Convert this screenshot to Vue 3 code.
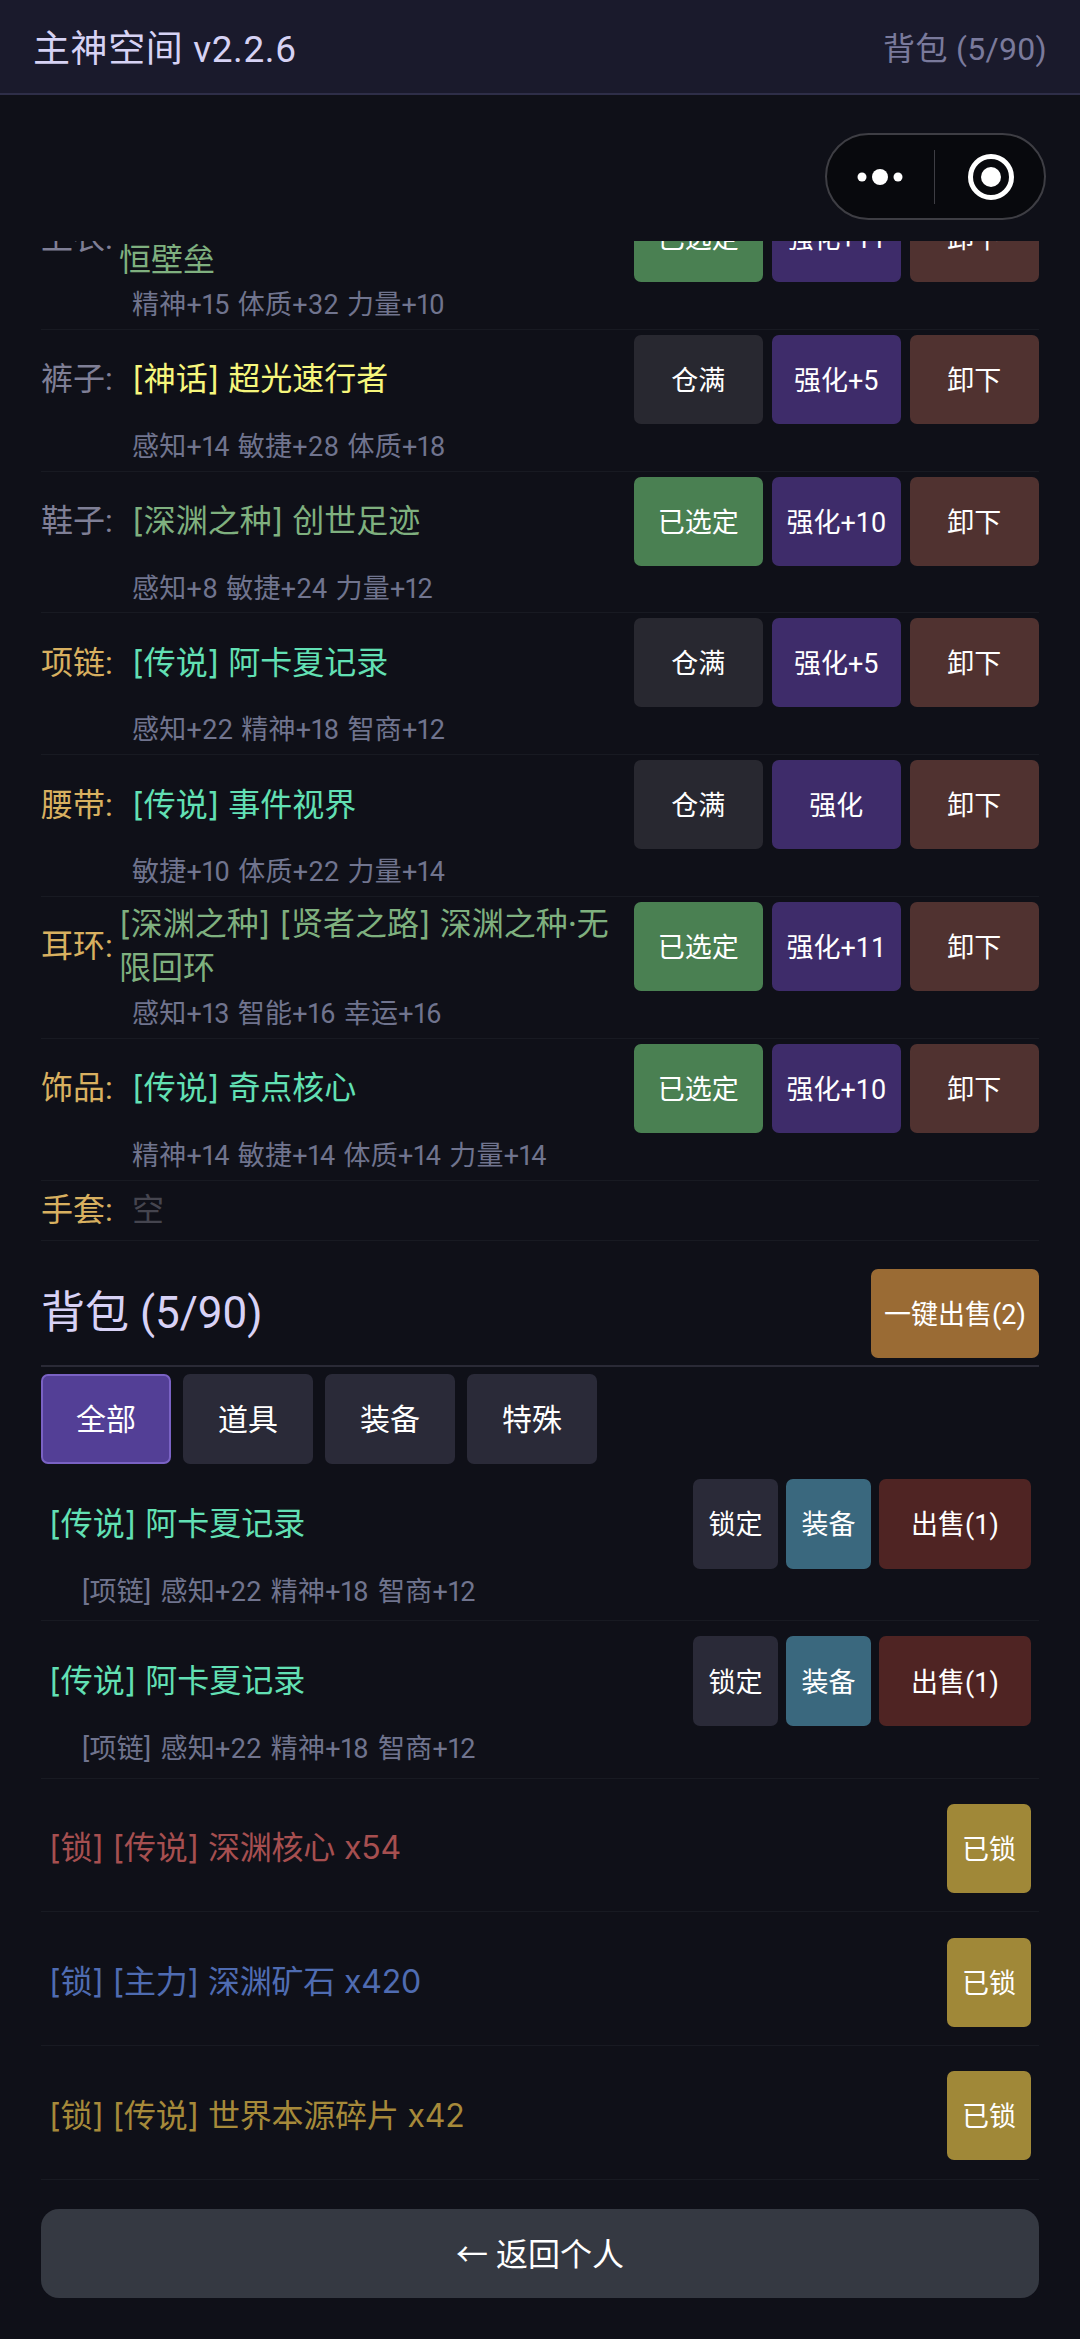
<script setup>
const gearRows = [
  { slot: '上衣', dim: true, name: '[深渊之种] [守护之路] 深渊之种·永恒壁垒', color: '#7fb07f', stats: '精神+15 体质+32 力量+10', pick: '已选定', forge: '强化+11' },
  { slot: '裤子', dim: true, name: '[神话] 超光速行者', color: '#f6f67c', stats: '感知+14 敏捷+28 体质+18', pick: '仓满', forge: '强化+5' },
  { slot: '鞋子', dim: true, name: '[深渊之种] 创世足迹', color: '#7fb07f', stats: '感知+8 敏捷+24 力量+12', pick: '已选定', forge: '强化+10' },
  { slot: '项链', name: '[传说] 阿卡夏记录', color: '#62e0b4', stats: '感知+22 精神+18 智商+12', pick: '仓满', forge: '强化+5' },
  { slot: '腰带', name: '[传说] 事件视界', color: '#62e0b4', stats: '敏捷+10 体质+22 力量+14', pick: '仓满', forge: '强化' },
  { slot: '耳环', name: '[深渊之种] [贤者之路] 深渊之种·无限回环', color: '#7fb07f', stats: '感知+13 智能+16 幸运+16', pick: '已选定', forge: '强化+11' },
  { slot: '饰品', name: '[传说] 奇点核心', color: '#62e0b4', stats: '精神+14 敏捷+14 体质+14 力量+14', pick: '已选定', forge: '强化+10' }
]

const tabs = ['全部', '道具', '装备', '特殊']

const bagItems = [
  { name: '[传说] 阿卡夏记录', stats: '[项链] 感知+22 精神+18 智商+12' },
  { name: '[传说] 阿卡夏记录', stats: '[项链] 感知+22 精神+18 智商+12' }
]

const lockedItems = [
  { name: '[锁] [传说] 深渊核心 x54', color: '#a64f50' },
  { name: '[锁] [主力] 深渊矿石 x420', color: '#4f6cb2' },
  { name: '[锁] [传说] 世界本源碎片 x42', color: '#a68a3a' }
]
</script>

<template>
  <div class="page">
    <header class="bar">
      <span class="title">主神空间 v2.2.6</span>
      <span class="bag-count">背包 (5/90)</span>
    </header>

    <div class="capsule">
      <svg class="dots" width="46" height="16" viewBox="0 0 46 16">
        <circle cx="5" cy="8" r="4.5" fill="#fff" />
        <circle cx="23" cy="8" r="8" fill="#fff" />
        <circle cx="41" cy="8" r="4.5" fill="#fff" />
      </svg>
      <i class="split"></i>
      <svg width="46" height="46" viewBox="0 0 46 46">
        <circle cx="23" cy="23" r="20.5" fill="none" stroke="#fff" stroke-width="5" />
        <circle cx="23" cy="23" r="10" fill="#fff" />
      </svg>
    </div>

    <main class="scroll">
      <div class="inner">
        <div v-for="row in gearRows" :key="row.slot" class="gear">
          <div class="gear-head">
            <div class="gear-info">
              <span class="slot" :class="{ dim: row.dim }">{{ row.slot }}:</span>
              <span class="gear-name" :style="{ color: row.color }">{{ row.name }}</span>
            </div>
            <button class="btn" :class="row.pick === '仓满' ? 'full' : 'picked'">{{ row.pick }}</button>
            <button class="btn forge">{{ row.forge }}</button>
            <button class="btn off">卸下</button>
          </div>
          <div class="gear-stats">{{ row.stats }}</div>
        </div>

        <div class="empty-row">
          <span class="slot">手套:</span>
          <span class="empty">空</span>
        </div>

        <div class="bag-head">
          <h2>背包 (5/90)</h2>
          <button class="btn sell-all">一键出售(2)</button>
        </div>

        <div class="tabs">
          <button v-for="(tab, i) in tabs" :key="tab" class="btn tab" :class="{ on: i === 0 }">{{ tab }}</button>
        </div>

        <div v-for="(item, i) in bagItems" :key="i" class="item">
          <div class="item-head">
            <span class="item-name">{{ item.name }}</span>
            <button class="btn lock">锁定</button>
            <button class="btn equip">装备</button>
            <button class="btn sell">出售(1)</button>
          </div>
          <div class="item-stats">{{ item.stats }}</div>
        </div>

        <div v-for="item in lockedItems" :key="item.name" class="locked">
          <span class="locked-name" :style="{ color: item.color }">{{ item.name }}</span>
          <button class="btn is-locked">已锁</button>
        </div>

        <button class="back">← 返回个人</button>
      </div>
    </main>
  </div>
</template>

<style>
html, body {
  margin: 0;
  background: #0f1018;
}
</style>

<style scoped>
.page {
  position: relative;
  height: 2339px;
  overflow: hidden;
  display: flex;
  flex-direction: column;
  background: #0f1018;
  font-family: Roboto, "Noto Sans CJK SC", sans-serif;
}
.bar {
  flex: none;
  display: flex;
  justify-content: space-between;
  align-items: center;
  padding: 0 33px 2px 33px;
  box-sizing: border-box;
  height: 95px;
  background: #1a1a2c;
  border-bottom: 2px solid #2e2e48;
}
.title {
  font-size: 37px;
  letter-spacing: 0.6px;
  color: #d6d2f4;
}
.bag-count {
  font-size: 32px;
  letter-spacing: 0.3px;
  color: #7a7a9c;
}
.capsule {
  position: absolute;
  top: 133px;
  left: 825px;
  width: 221px;
  height: 87px;
  box-sizing: border-box;
  display: flex;
  align-items: center;
  padding-left: 30px;
  background: #08090d;
  border: 2px solid #3e3e44;
  border-radius: 44px;
}
.split {
  width: 1px;
  height: 54px;
  margin: 0 33px 0 31px;
  background: #3e3e44;
}
.scroll {
  flex: 1;
  margin-top: 146px;
  overflow: hidden;
}
.inner {
  margin-top: -53px;
  padding: 0 41px;
}
.btn {
  flex: none;
  padding: 0 0 2px;
  border: none;
  border-radius: 7px;
  font-family: inherit;
  font-size: 27px;
  color: #fff;
}
.gear {
  height: 141.8px;
  box-sizing: border-box;
  padding-top: 5px;
  border-bottom: 1px solid #181a22;
}
.gear-head {
  display: flex;
  align-items: center;
  height: 89px;
}
.gear-head .btn {
  width: 129.5px;
  height: 89px;
  margin-left: 8.5px;
}
.gear-info {
  flex: 1;
  min-width: 0;
  display: flex;
  align-items: center;
  gap: 6px;
  margin-right: 10px;
}
.slot {
  flex: 0 1 85px;
  white-space: nowrap;
  font-size: 32px;
  line-height: 44px;
  color: #d8b060;
}
.slot.dim {
  color: #7f7f96;
}
.gear-name {
  font-family: Inter, "Noto Sans CJK SC", sans-serif;
  font-size: 32px;
  line-height: 44px;
}
.gear-stats {
  margin: 7px 0 0 91px;
  font-size: 27px;
  font-variant-numeric: proportional-nums;
  letter-spacing: 0.3px;
  word-spacing: 1px;
  line-height: 32px;
  color: #70748e;
}
.full {
  background: #282830;
}
.picked {
  background: #4a8052;
}
.forge {
  background: #3e2c6a;
}
.off {
  background: #503230;
}
.empty-row {
  height: 60px;
  box-sizing: border-box;
  display: flex;
  align-items: center;
  gap: 6px;
  border-bottom: 1px solid #181a22;
}
.empty {
  font-size: 32px;
  line-height: 44px;
  color: #45454f;
}
.bag-head {
  display: flex;
  justify-content: space-between;
  align-items: center;
  margin-top: 28px;
  padding-bottom: 7px;
  border-bottom: 2px solid #2a2a36;
}
.bag-head h2 {
  margin: 0;
  font-size: 44px;
  font-weight: 400;
  line-height: 60px;
  color: #d8d2f6;
}
.sell-all {
  width: 168px;
  height: 89px;
  background: #9a6b34;
}
.tabs {
  display: flex;
  gap: 12px;
  margin-top: 7px;
}
.tab {
  width: 130px;
  height: 90px;
  padding-bottom: 3px;
  background: #2a2a38;
  font-size: 30px;
}
.tab.on {
  box-sizing: border-box;
  background: #533f96;
  border: 2px solid #7a62c4;
}
.item {
  height: 157.5px;
  box-sizing: border-box;
  padding: 15px 8px 0;
  border-bottom: 1px solid #181a22;
}
.item-head {
  display: flex;
  align-items: center;
  gap: 8px;
}
.item-name {
  flex: 1;
  font-family: Inter, "Noto Sans CJK SC", sans-serif;
  font-size: 32px;
  line-height: 44px;
  color: #62e0b4;
}
.lock,
.equip {
  width: 85px;
  height: 90px;
}
.lock {
  background: #2a2a38;
}
.equip {
  background: #3a687e;
}
.sell {
  width: 152px;
  height: 90px;
  background: #4f2423;
}
.item-stats {
  margin: 7px 0 0 33px;
  font-size: 27px;
  font-variant-numeric: proportional-nums;
  letter-spacing: 0.3px;
  word-spacing: 2px;
  line-height: 32px;
  color: #70748e;
}
.locked {
  height: 133.7px;
  box-sizing: border-box;
  display: flex;
  align-items: center;
  justify-content: space-between;
  padding: 7px 8px 0;
  border-bottom: 1px solid #181a22;
}
.locked-name {
  font-family: Inter, "Noto Sans CJK SC", sans-serif;
  font-size: 32px;
  letter-spacing: -0.2px;
  line-height: 44px;
}
.is-locked {
  width: 84px;
  height: 89px;
  background: #a08838;
}
.back {
  display: block;
  width: 100%;
  height: 89px;
  margin-top: 29px;
  padding: 0 0 2px;
  border: none;
  border-radius: 18px;
  background: #353942;
  font-family: inherit;
  font-size: 32px;
  color: #fff;
}
</style>
